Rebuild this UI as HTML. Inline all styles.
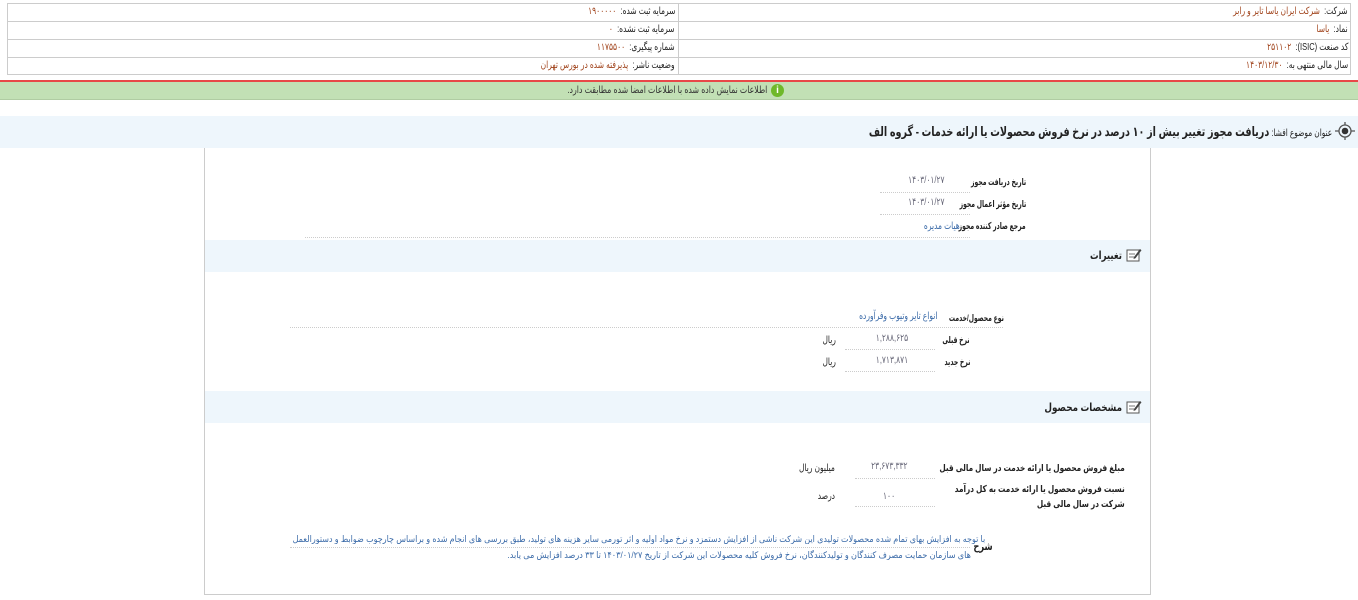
<!DOCTYPE html>
<html><head><meta charset="utf-8"><style>
body{margin:0;width:1358px;height:600px;position:relative;background:#fff;font-family:"Liberation Sans","DejaVu Sans",sans-serif;font-size:10px;color:#222;overflow:hidden}
.a{position:absolute;direction:rtl;white-space:nowrap;transform-origin:right center;transform:scaleX(.75)}
.l{font-weight:bold;font-size:9.5px;transform:scaleX(.64)}
.r{color:#a0421a}
.b{color:#3a6aa8}
.g{color:#667}
.dot{position:absolute;border-bottom:1px dotted #ccc;height:0}
</style></head><body>
<div style="position:absolute;left:7px;top:3px;width:1344px;height:72px;border:1px solid #ccc;box-sizing:border-box"></div>
<div style="position:absolute;left:7px;top:21px;width:1344px;border-top:1px solid #ccc"></div>
<div style="position:absolute;left:7px;top:39px;width:1344px;border-top:1px solid #ccc"></div>
<div style="position:absolute;left:7px;top:57px;width:1344px;border-top:1px solid #ccc"></div>
<div style="position:absolute;left:678px;top:3px;height:72px;border-left:1px solid #ccc"></div>
<div class="a" style="right:10px;top:6px">شرکت: &nbsp;<span class="r">شرکت ایران یاسا تایر و رابر</span></div>
<div class="a" style="right:10px;top:24px">نماد: &nbsp;<span class="r">یاسا</span></div>
<div class="a" style="right:10px;top:42px">کد صنعت (ISIC): &nbsp;<span class="r">۲۵۱۱۰۲</span></div>
<div class="a" style="right:10px;top:60px">سال مالی منتهی به: &nbsp;<span class="r">۱۴۰۳/۱۲/۳۰</span></div>
<div class="a" style="right:683px;top:6px">سرمایه ثبت شده: &nbsp;<span class="r">۱۹۰۰۰۰۰</span></div>
<div class="a" style="right:683px;top:24px">سرمایه ثبت نشده: &nbsp;<span class="r">۰</span></div>
<div class="a" style="right:683px;top:42px">شماره پیگیری: &nbsp;<span class="r">۱۱۷۵۵۰۰</span></div>
<div class="a" style="right:683px;top:60px">وضعیت ناشر: &nbsp;<span class="r">پذیرفته شده در بورس تهران</span></div>
<div style="position:absolute;left:0;top:80px;width:1358px;height:2px;background:#e84848"></div>
<div style="position:absolute;left:0;top:82px;width:1358px;height:17px;background:#c2e0b5;border-bottom:1px solid #b0cca3"></div>
<div class="a" style="right:591px;top:85px;color:#333;transform:scaleX(.78)">اطلاعات نمایش داده شده با اطلاعات امضا شده مطابقت دارد.</div>
<div style="position:absolute;left:771px;top:84px;width:13px;height:13px;border-radius:50%;background:#6fb82a;color:#fff;font-size:10px;font-weight:bold;text-align:center;line-height:13px">i</div>
<div style="position:absolute;left:0;top:116px;width:1358px;height:32px;background:#eef6fc"></div>
<svg style="position:absolute;left:1334px;top:121px" width="22" height="20" viewBox="0 0 22 20"><circle cx="11" cy="10" r="6" fill="none" stroke="#555" stroke-width="1.3"/><circle cx="11" cy="10" r="3.3" fill="#333"/><path d="M1 10h4M17 10h4M11 1v3M11 16v3" stroke="#555" stroke-width="1.3"/></svg>
<div class="a" style="right:26px;top:124px;font-size:13px;transform:scaleX(.74)"><span style="font-size:10px">عنوان موضوع افشا: </span><b>دریافت مجوز تغییر بیش از ۱۰ درصد در نرخ فروش محصولات یا ارائه خدمات - گروه الف</b></div>
<div style="position:absolute;left:204px;top:148px;width:947px;height:447px;border:1px solid #ccc;border-top:none;box-sizing:border-box"></div>
<div class="a l" style="right:332px;top:177px">تاریخ دریافت مجوز</div>
<div class="a g" style="right:413px;top:175px">۱۴۰۳/۰۱/۲۷</div>
<div class="dot" style="left:880px;top:192px;width:90px"></div>
<div class="a l" style="right:332px;top:199px">تاریخ مؤثر اعمال مجوز</div>
<div class="a g" style="right:413px;top:197px">۱۴۰۳/۰۱/۲۷</div>
<div class="dot" style="left:880px;top:214px;width:90px"></div>
<div class="a l" style="right:332px;top:221px">مرجع صادر کننده مجوز</div>
<div class="a b" style="right:398px;top:221px">هیات مدیره</div>
<div class="dot" style="left:305px;top:237px;width:665px"></div>
<div style="position:absolute;left:205px;top:240px;width:945px;height:32px;background:#eef6fc"></div>
<svg style="position:absolute;left:1126px;top:247px" width="16" height="15" viewBox="0 0 16 15"><rect x="1" y="3" width="12" height="11" fill="#fff" stroke="#555"/><path d="M3 7h6M3 10h5" stroke="#777"/><path d="M8 10l6-8 1.5 1.2-6 8-2 .8z" fill="#444"/></svg>
<div class="a" style="right:236px;top:249px;font-size:11px;font-weight:bold;transform:scaleX(.78)">تغییرات</div>
<div class="a l" style="right:354px;top:313px">نوع محصول/خدمت</div>
<div class="a b" style="right:421px;top:311px">انواع تایر وتیوب وفرآورده</div>
<div class="dot" style="left:290px;top:327px;width:713px"></div>
<div class="a l" style="right:388px;top:335px">نرخ قبلی</div>
<div class="a g" style="right:450px;top:333px">۱,۲۸۸,۶۲۵</div>
<div class="a" style="right:522px;top:335px">ریال</div>
<div class="dot" style="left:845px;top:349px;width:90px"></div>
<div class="a l" style="right:388px;top:357px">نرخ جدید</div>
<div class="a g" style="right:450px;top:355px">۱,۷۱۳,۸۷۱</div>
<div class="a" style="right:522px;top:357px">ریال</div>
<div class="dot" style="left:845px;top:371px;width:90px"></div>
<div style="position:absolute;left:205px;top:391px;width:945px;height:32px;background:#eef6fc"></div>
<svg style="position:absolute;left:1126px;top:399px" width="16" height="15" viewBox="0 0 16 15"><rect x="1" y="3" width="12" height="11" fill="#fff" stroke="#555"/><path d="M3 7h6M3 10h5" stroke="#777"/><path d="M8 10l6-8 1.5 1.2-6 8-2 .8z" fill="#444"/></svg>
<div class="a" style="right:236px;top:401px;font-size:11px;font-weight:bold;transform:scaleX(.8)">مشخصات محصول</div>
<div class="a l" style="right:233px;top:463px;transform:scaleX(.77)">مبلغ فروش محصول یا ارائه خدمت در سال مالی قبل</div>
<div class="a g" style="right:450px;top:461px">۲۳,۶۷۳,۳۳۲</div>
<div class="a" style="right:523px;top:463px">میلیون ریال</div>
<div class="dot" style="left:855px;top:478px;width:80px"></div>
<div class="a l" style="right:233px;top:482px;line-height:15px;transform:scaleX(.77)">نسبت فروش محصول یا ارائه خدمت به کل درآمد<br>شرکت در سال مالی قبل</div>
<div class="a g" style="right:463px;top:491px">۱۰۰</div>
<div class="a" style="right:523px;top:491px">درصد</div>
<div class="dot" style="left:855px;top:506px;width:80px"></div>
<div class="a" style="right:365px;top:540px;font-size:11px;font-weight:bold">شرح</div>
<div class="a b" style="right:373px;top:534px;font-size:9px;transform:scaleX(.89)">با توجه به افزایش بهای تمام شده محصولات تولیدی این شرکت ناشی از افزایش دستمزد و نرخ مواد اولیه و اثر تورمی سایر هزینه های تولید، طبق بررسی های انجام شده و براساس چارچوب ضوابط و دستورالعمل</div>
<div class="dot" style="left:290px;top:547px;width:680px"></div>
<div class="a b" style="right:387px;top:550px;font-size:9px;transform:scaleX(.9)">های سازمان حمایت مصرف کنندگان و تولیدکنندگان، نرخ فروش کلیه محصولات این شرکت از تاریخ ۱۴۰۳/۰۱/۲۷ تا ۳۳ درصد افزایش می یابد.</div>
</body></html>
